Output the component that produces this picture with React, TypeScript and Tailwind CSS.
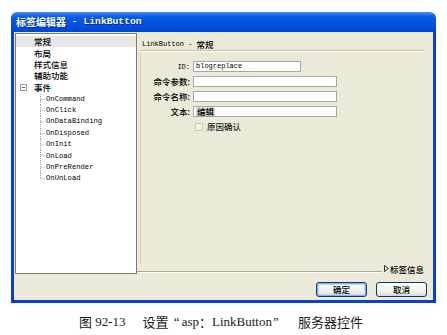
import React from "react";

const cjk = "font-['Noto_Sans_CJK_SC',sans-serif]";
const mono = "font-['Liberation_Mono',monospace]";

function Connector({ last }: { last: boolean }) {
  return (
    <svg width="5" height="11.35" className="shrink-0 block" viewBox="0 0 5 11.35">
      <line x1="0.5" y1="0" x2="0.5" y2={last ? 5.7 : 11.35} stroke="#a0a0a0" strokeWidth="1" strokeDasharray="1 1" />
      <line x1="0.5" y1="5.7" x2="5" y2="5.7" stroke="#a0a0a0" strokeWidth="1" strokeDasharray="1 1" />
    </svg>
  );
}

function Field({ label, value, wide = true, latin = false }: { label: React.ReactNode; value?: React.ReactNode; wide?: boolean; latin?: boolean }) {
  return (
    <div className="flex h-[11px] items-center">
      <div className="w-[52px] shrink-0 text-right pr-[3px] text-[8.5px] leading-[11px] text-black">{label}</div>
      <div
        className={`h-[11px] ${wide ? "w-[144px]" : "w-[108px]"} border border-[#a7a6aa] bg-white flex items-center pl-[2px] ${latin ? mono : cjk}`}
      >
        {value}
      </div>
    </div>
  );
}

export default function App() {
  const events = ["OnCommand", "OnClick", "OnDataBinding", "OnDisposed", "OnInit", "OnLoad", "OnPreRender", "OnUnLoad"];
  return (
    <div className="w-[447px] h-[335px] bg-white overflow-hidden flex flex-col">
      {/* Window */}
      <div className="ml-[11px] mt-[12px] w-[425px] flex flex-col">
        {/* Title bar */}
        <div className="h-[20px] rounded-t-[6px] bg-[linear-gradient(to_bottom,#3d8ef7_0%,#0a5ae6_25%,#0253e3_60%,#0046cf_100%)] flex items-center pl-[5px]">
          <span className={`${cjk} text-[10px] font-bold text-white leading-none [text-shadow:1px_1px_0_#0a2a8a]`}>标签编辑器</span>
          <span className={`${mono} text-[9.7px] font-bold text-white leading-none whitespace-pre [text-shadow:1px_1px_0_#0a2a8a]`}> - LinkButton</span>
        </div>
        {/* Body */}
        <div className="h-[271px] border-x-[3px] border-b-[3px] border-[#0a3fd0] bg-[#ece9d8] flex flex-col">
          <div className="mt-[1px] h-[241px] flex">
            {/* Tree */}
            <div className="ml-[1px] w-[122px] h-full border border-[#7d7b74] bg-white pt-[2px] flex flex-col">
              <div className={`h-[11.35px] bg-[#e6e6e6] pl-[18px] flex items-center ${cjk} text-[8.5px] font-medium leading-none text-black`}>常规</div>
              {["布局", "样式信息", "辅助功能"].map((t) => (
                <div key={t} className={`h-[11.35px] pl-[18px] flex items-center ${cjk} text-[8.5px] font-medium leading-none text-black`}>{t}</div>
              ))}
              <div className="h-[11.35px] flex items-center">
                <div className="ml-[4px] w-[7px] h-[7px] border border-[#919b9c] flex items-center justify-center">
                  <div className="w-[3px] h-px bg-[#4d6185]" />
                </div>
                <span className={`ml-[7px] ${cjk} text-[8.5px] font-medium leading-none text-black`}>事件</span>
              </div>
              <div className="mt-[1px] flex flex-col">
                {events.map((e, i) => (
                  <div key={e} className="h-[11.35px] flex items-center pl-[24px]">
                    <Connector last={i === events.length - 1} />
                    <span className={`ml-[1px] ${mono} text-[7.2px] leading-none text-black`}>{e}</span>
                  </div>
                ))}
              </div>
            </div>
            {/* Right panel */}
            <div className="flex-1 flex flex-col">
              <div className="pt-[6px] pl-[5px] flex items-center h-[17px]">
                <span className={`${mono} text-[7px] leading-none text-black whitespace-pre`}>LinkButton - </span>
                <span className={`${cjk} text-[8.5px] font-medium leading-none text-black`}>常规</span>
              </div>
              <div className="ml-[3px] mr-[9px] h-[2px] border-t border-[#c5c2b2] border-b border-b-white" />
              <div className="flex-1 ml-[3px] border-l border-[#d6d3c5] flex flex-col">
                <div className="mt-[9px] flex flex-col gap-[4px]">
                  <Field
                    label={<span className={`${mono} text-[7px]`}>ID:</span>}
                    value={<span className="text-[7px] leading-none text-black">blogreplace</span>}
                    wide={false}
                    latin
                  />
                  <Field label={<span className={`${cjk} font-medium`}>命令参数:</span>} />
                  <Field label={<span className={`${cjk} font-medium`}>命令名称:</span>} />
                  <Field
                    label={<span className={`${cjk} font-medium`}>文本:</span>}
                    value={<span className="text-[8.5px] font-medium leading-[9px] bg-[#dcdcdc] text-black px-px">编辑</span>}
                  />
                </div>
                <div className="mt-[5px] ml-[54px] flex items-center h-[9px]">
                  <div className="w-[8px] h-[8px] border border-[#cac8bb] bg-[#f4f3ee]" />
                  <span className={`ml-[4px] ${cjk} text-[8.5px] font-medium leading-none text-[#222]`}>原因确认</span>
                </div>
              </div>
              <div className="h-[10px] flex items-end">
                <div className="flex-1 h-[2px] border-t border-[#aca899] border-b border-b-white mb-[1px]" />
                <div className="flex items-center pl-[2px] pr-[9px] pb-[1px]">
                  <svg width="5" height="7" viewBox="0 0 5 7" className="block">
                    <path d="M0.5 0.5 L4.5 3.5 L0.5 6.5 Z" fill="none" stroke="#333" strokeWidth="1" />
                  </svg>
                  <span className={`ml-[1px] ${cjk} text-[8.5px] font-medium leading-none text-black`}>标签信息</span>
                </div>
              </div>
            </div>
          </div>
          {/* Buttons */}
          <div className="mt-[8px] flex justify-end gap-[9px] pr-[6px]">
            <div className={`w-[51px] h-[15px] rounded-[3px] border border-[#003c74] bg-[linear-gradient(to_bottom,#ffffff,#f0efe8_70%,#dcdad0)] shadow-[inset_0_0_0_1px_#8eb2ef,inset_0_0_0_2px_#c4d6f6] flex items-center justify-center ${cjk} text-[8.5px] font-medium leading-none text-black`}>确定</div>
            <div className={`w-[51px] h-[15px] rounded-[3px] border border-[#003c74] bg-[linear-gradient(to_bottom,#ffffff,#f0efe8_70%,#dcdad0)] flex items-center justify-center ${cjk} text-[8.5px] font-medium leading-none text-black`}>取消</div>
          </div>
        </div>
      </div>
      {/* Caption */}
      <div className="mt-[11px] ml-[79px] flex items-center h-[15px] font-['Liberation_Serif','Noto_Sans_CJK_SC',serif] text-[13px] leading-none text-[#1a1a1a] whitespace-pre">
        <span className={cjk}>图</span>
        <span> 92-13</span>
        <span className={`ml-[17px] ${cjk}`}>设置</span>
        <span className="inline-block w-[11px] text-right">“</span>
        <span className="ml-[2px]">asp</span>
        <span className={cjk}>：</span>
        <span>LinkButton</span>
        <span className="inline-block w-[26px] text-left pl-px">”</span>
        <span className={cjk}>服务器控件</span>
      </div>
    </div>
  );
}
